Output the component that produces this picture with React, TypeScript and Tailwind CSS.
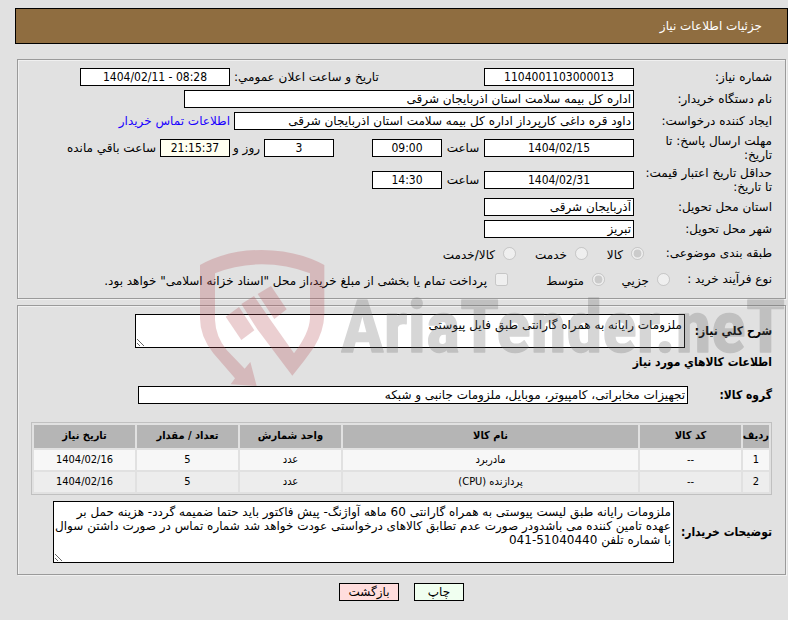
import { ReactNode } from "react";

const items = [
  { row: 1, code: "--", name: "مادربرد", unit: "عدد", count: 5, date: "1404/02/16" },
  { row: 2, code: "--", name: "پردازنده (CPU)", unit: "عدد", count: 5, date: "1404/02/16" },
];

const inputBase = "h-[18px] border border-black px-0.5 text-[12px] leading-4 text-black";
const condensed = "font-['DejaVu_Sans_Condensed','DejaVu_Sans',sans-serif]";

interface FieldProps {
  id: string;
  value: string;
  className: string;
  numeric?: boolean;
}

function Field({ id, value, className, numeric = false }: FieldProps) {
  return (
    <input
      id={id}
      type="text"
      readOnly
      value={value}
      className={`${inputBase} ${numeric ? `${condensed} text-center [direction:ltr]` : ""} ${className}`}
    />
  );
}

interface RowProps {
  id?: string;
  label: string;
  height?: string;
  labelWidth?: string;
  children: ReactNode;
}

function Row({ id, label, height = "h-[22px]", labelWidth = "w-[138px]", children }: RowProps) {
  return (
    <div className={`flex items-center ${height}`}>
      <label htmlFor={id} className={`${labelWidth} shrink-0 pl-2 leading-[14px]`}>
        {label}
      </label>
      {children}
    </div>
  );
}

interface ChoiceProps {
  type?: "radio" | "checkbox";
  name: string;
  text: string;
  checked?: boolean;
  width?: string;
}

function Choice({ type = "radio", name, text, checked = false, width = "" }: ChoiceProps) {
  return (
    <label className={`flex shrink-0 items-center gap-2 whitespace-nowrap ${width}`}>
      <input type={type} name={name} disabled defaultChecked={checked} className="size-[13px] shrink-0" />
      <span className="pt-1">{text}</span>
    </label>
  );
}

function Panel({ children }: { children: ReactNode }) {
  return (
    <section className="mr-[2px] ml-[17px] border border-[#9a9a9a] pr-[13px] shadow-[1px_1px_0_#f0f0f0,inset_1px_1px_0_#f0f0f0]">
      {children}
    </section>
  );
}

function Watermark() {
  return (
    <svg
      className="pointer-events-none absolute top-[248px] right-0 h-[140px] w-[588px]"
      viewBox="60 24 1764 420"
      opacity="0.27"
      aria-hidden="true"
    >
      <g fill="#b85058">
        <path d="M60 75 Q140 30 245 30 Q350 30 433 75 V225 Q431 275 402 322 Q372 365 337 407 L232 268 L184 192 L222 168 L270 238 L342 340 Q388 280 390 235 V100 Q320 73 245 73 Q170 73 105 100 V240 Q107 290 140 330 L194 386 L211 366 L230 438 L152 433 L165 415 L100 340 Q60 290 60 235 Z" />
        <path d="M137 230 L177 201 L223 271 L184 300 Z" />
        <path d="M233 162 L273 138 L320 208 L283 237 Z" />
      </g>
      <text
        x="482"
        y="335"
        direction="ltr"
        fill="#6b6b6b"
        stroke="#6b6b6b"
        strokeWidth="4"
        strokeLinejoin="round"
        fontSize="217"
        fontWeight="700"
        fontFamily="'Liberation Sans Narrow', 'Roboto Condensed', Roboto, sans-serif"
      >
        AriaTender.neT
      </text>
    </svg>
  );
}

export default function App() {
  return (
    <div
      dir="rtl"
      lang="fa"
      className="relative min-h-screen overflow-hidden bg-[#e1e1e1] pt-2 font-['DejaVu_Sans',sans-serif] text-[12px] text-black"
    >
      <header className="ml-[15px] flex h-9 items-center border border-black bg-[#8f6d40] pr-[25px]">
        <h1 className="text-white">جزئیات اطلاعات نیاز</h1>
      </header>

      <div className="mt-[15px]">
        <Panel>
          <div className="py-1.5">
            <Row id="need-no" label="شماره نیاز:">
              <Field id="need-no" value="1104001103000013" numeric className="w-[150px] bg-white" />
              <label htmlFor="announced" className="w-[254px] pl-1 text-end">
                تاریخ و ساعت اعلان عمومي:
              </label>
              <Field id="announced" value="1404/02/11 - 08:28" numeric className="w-[150px] bg-white" />
            </Row>
            <Row id="org" label="نام دستگاه خریدار:">
              <Field id="org" value="اداره کل بیمه سلامت استان اذربایجان شرقی" className="w-[450px] bg-white" />
            </Row>
            <Row id="creator" label="ایجاد کننده درخواست:">
              <Field
                id="creator"
                value="داود قره داغی کارپرداز اداره کل بیمه سلامت استان اذربایجان شرقی"
                className="w-[400px] bg-white"
              />
              <a href="#contact" className="mr-1 text-[#1a00ff]">
                اطلاعات تماس خریدار
              </a>
            </Row>
            <Row id="deadline" label="مهلت ارسال پاسخ: تا تاریخ:" height="h-8">
              <Field id="deadline" value="1404/02/15" numeric className="w-[150px] bg-white" />
              <label htmlFor="deadline-time" className="w-[42px] text-center">
                ساعت
              </label>
              <Field id="deadline-time" value="09:00" numeric className="w-[70px] bg-white" />
              <Field id="days-left" value="3" numeric className="mr-[38px] w-[70px] bg-white" />
              <label htmlFor="days-left" className="w-[34px] pr-1 whitespace-nowrap">
                روز و
              </label>
              <Field id="time-left" value="21:15:37" numeric className="w-[70px] bg-[#fffff0]" />
              <label htmlFor="time-left" className="mr-1">
                ساعت باقي مانده
              </label>
            </Row>
            <Row id="valid-until" label="حداقل تاریخ اعتبار قیمت: تا تاریخ:" height="h-8">
              <Field id="valid-until" value="1404/02/31" numeric className="w-[150px] bg-white" />
              <label htmlFor="valid-time" className="w-[42px] text-center">
                ساعت
              </label>
              <Field id="valid-time" value="14:30" numeric className="w-[70px] bg-white" />
            </Row>
            <Row id="province" label="استان محل تحویل:">
              <Field id="province" value="آذربایجان شرقی" className="w-[150px] bg-white" />
            </Row>
            <Row id="city" label="شهر محل تحویل:">
              <Field id="city" value="تبریز" className="w-[150px] bg-white" />
            </Row>
            <Row label="طبقه بندی موضوعی:" height="h-[26px]" labelWidth="w-32">
              <Choice name="category" text="کالا" checked width="w-14" />
              <Choice name="category" text="خدمت" width="w-[72px]" />
              <Choice name="category" text="کالا/خدمت" />
            </Row>
            <Row label="نوع فرآیند خرید :" height="h-[26px]" labelWidth="w-[102px]">
              <Choice name="process" text="جزیي" width="w-[65px]" />
              <Choice name="process" text="متوسط" checked width="w-[97px]" />
              <Choice
                type="checkbox"
                name="treasury"
                text={'پرداخت تمام یا بخشی از مبلغ خرید،از محل "اسناد خزانه اسلامی" خواهد بود.'}
              />
            </Row>
          </div>
        </Panel>
      </div>

      <div className="mt-1.5">
        <Panel>
          <div className="flex items-center pt-2">
            <label htmlFor="summary" className={`w-[87px] shrink-0 font-bold ${condensed}`}>
              شرح کلي نیاز:
            </label>
            <textarea
              id="summary"
              readOnly
              value="ملزومات رایانه به همراه گارانتی طبق فایل پیوستی"
              className="block h-[34px] w-[550px] border border-black bg-white px-0.5 py-[3px] leading-[14px]"
            />
          </div>
          <h2 className={`flex h-7 items-center font-bold ${condensed}`}>اطلاعات کالاهاي مورد نیاز</h2>
          <div className="mt-[10px] flex h-[18px] items-center">
            <label htmlFor="group" className={`w-[84px] shrink-0 font-bold ${condensed}`}>
              گروه کالا:
            </label>
            <Field
              id="group"
              value="تجهیزات مخابراتی، کامپیوتر، موبایل، ملزومات جانبی و شبکه"
              className="w-[550px] bg-white"
            />
          </div>
          <div className="mt-[18px] ml-[13px]">
            <table
              className={`w-full table-fixed border-separate border-spacing-[2px] border border-[#c0c0c0] text-center text-[11px] ${condensed}`}
            >
              <thead>
                <tr className="h-[23px] bg-[#b5b5b5]">
                  <th className="w-[26px] whitespace-nowrap">ردیف</th>
                  <th className="w-[101px]">کد کالا</th>
                  <th>نام کالا</th>
                  <th className="w-[101px]">واحد شمارش</th>
                  <th className="w-[101px]">تعداد / مقدار</th>
                  <th className="w-[101px]">تاریخ نیاز</th>
                </tr>
              </thead>
              <tbody>
                {items.map((item) => (
                  <tr key={item.row} className="h-5 odd:bg-[#f7f7f7] even:bg-[#ededed]">
                    <td>{item.row}</td>
                    <td>{item.code}</td>
                    <td>{item.name}</td>
                    <td>{item.unit}</td>
                    <td>{item.count}</td>
                    <td>{item.date}</td>
                  </tr>
                ))}
              </tbody>
            </table>
          </div>
          <div className="mt-1.5 mb-[11px] flex items-center">
            <label htmlFor="notes" className={`w-[98px] shrink-0 font-bold whitespace-nowrap ${condensed}`}>
              توضیحات خریدار:
            </label>
            <textarea
              id="notes"
              readOnly
              value="ملزومات رایانه طبق لیست پیوستی به همراه گارانتی 60 ماهه آواژنگ- پیش فاکتور باید حتما ضمیمه گردد- هزینه حمل بر عهده تامین کننده می باشدودر صورت عدم تطابق کالاهای درخواستی عودت خواهد شد شماره تماس در صورت داشتن سوال با شماره تلفن 51040440-041"
              className="block h-[62px] w-[621px] border border-black bg-white py-[3px] pr-0.5 pl-0 leading-[14px]"
            />
          </div>
        </Panel>
      </div>

      <div className="mt-2 flex justify-center gap-[15px] pl-[15px]">
        <button type="button" className="h-[18px] w-[50px] border border-black bg-[#f0fff0] leading-4">
          چاپ
        </button>
        <button type="button" className="h-[18px] w-[60px] border border-black bg-[#ffdddd] leading-4">
          بازگشت
        </button>
      </div>

      <Watermark />
    </div>
  );
}
